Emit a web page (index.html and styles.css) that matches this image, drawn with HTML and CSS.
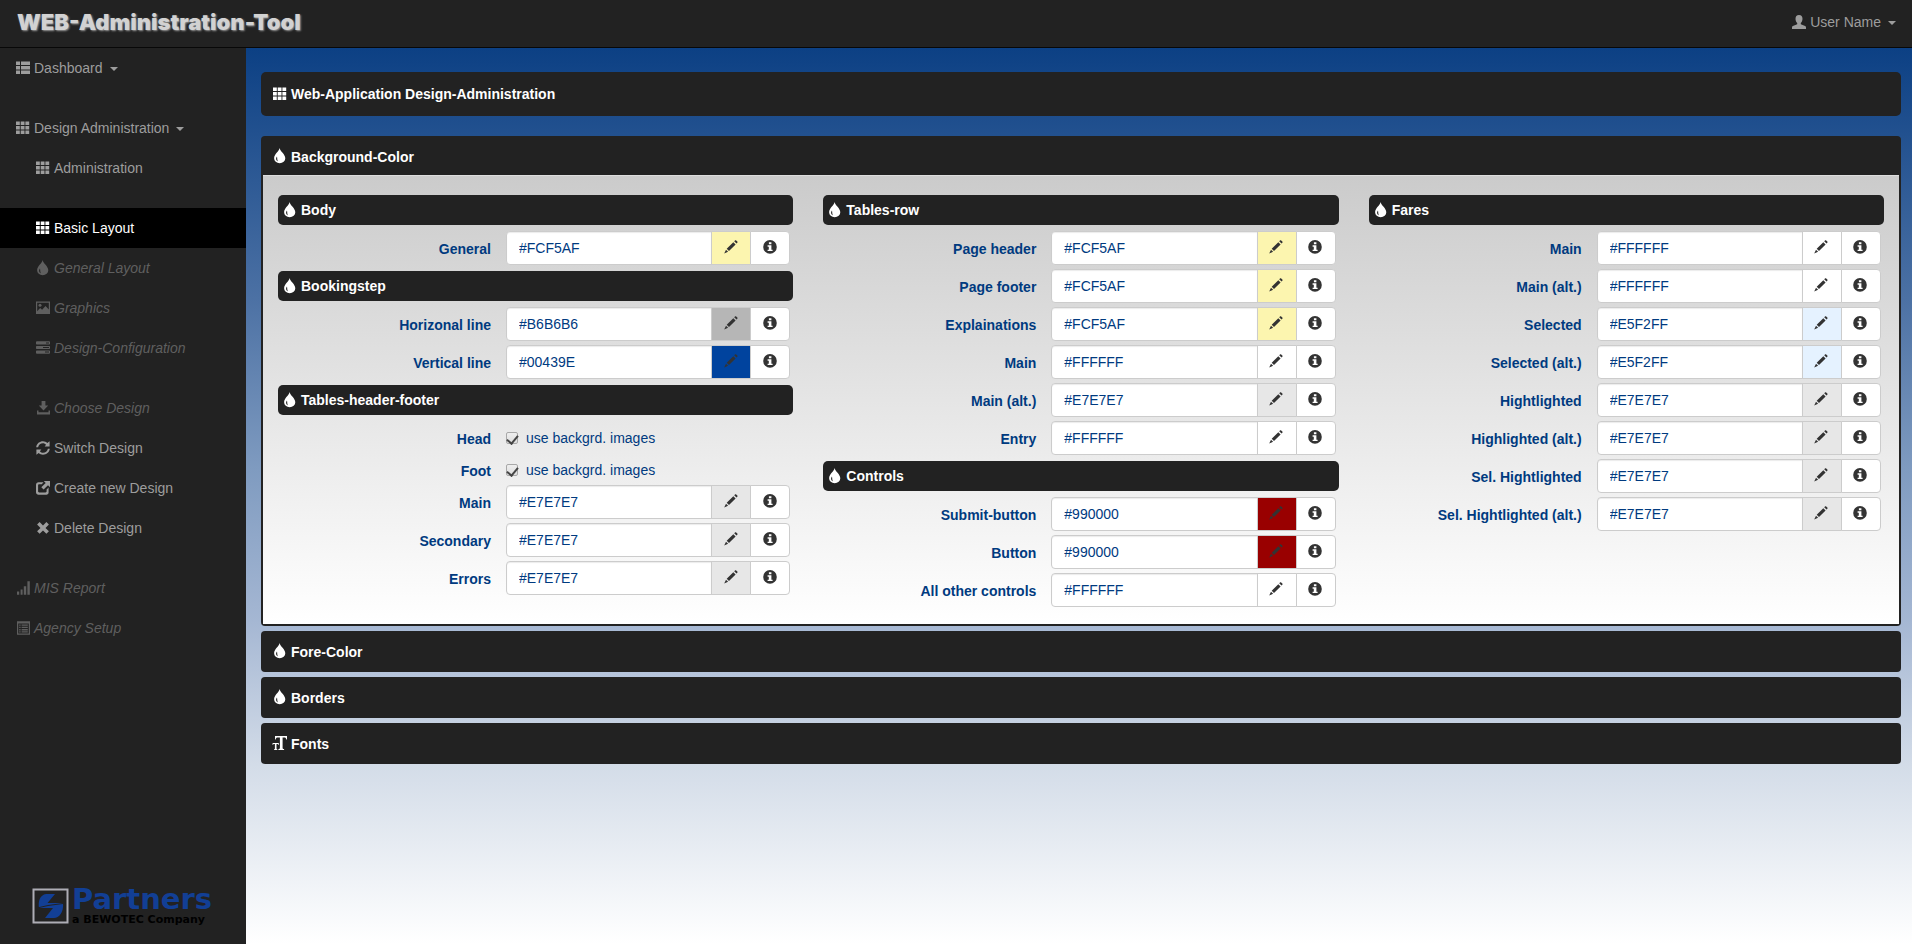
FILE: index.html
```html
<!DOCTYPE html>
<html lang="en">
<head>
<meta charset="utf-8">
<title>WEB-Administration-Tool</title>
<link rel="stylesheet" href="styles.css">
</head>
<body>
<svg class="sprite" aria-hidden="true">
  <symbol id="i-th" viewBox="0 0 14 14"><path d="M0 .5h3.800v3.500H0zM4.700.5h3.800v3.500H4.700zM9.400.5h3.800v3.500H9.400zM0 5h3.800v3.500H0zM4.700 5h3.800v3.500H4.700zM9.400 5h3.800v3.500H9.400zM0 9.500h3.800V13H0zM4.700 9.500h3.800V13H4.700zM9.400 9.500h3.800V13H9.400z"/></symbol>
  <symbol id="i-th-list" viewBox="0 0 14 14"><path d="M0 .5h4v3.500H0zM5 .5h9v3.500H5zM0 5h4v3.500H0zM5 5h9v3.500H5zM0 9.500h4V13H0zM5 9.500h9V13H5z"/></symbol>
  <symbol id="i-tint" viewBox="0 0 14 14" overflow="visible"><path fill-rule="evenodd" d="M6.600-.9C7.100 2.300 12.300 5.500 12.300 9.200a5.600 5 0 0 1-11.200 0C1.100 5.500 6.100 2.300 6.600-.9zM4 7.600C2.400 9.300 3.100 11.800 4.900 12.300 4 10.900 4.400 9.600 4 7.600z"/></symbol>
  <symbol id="i-picture" viewBox="0 0 14 14"><path fill-rule="evenodd" d="M0 .5h14V13H0zM1.200 1.700v8.600l2.900-3.200 2 1.600 3.400-3.800 3.300 3.600V1.700z"/><circle cx="4" cy="4.200" r="1.500"/></symbol>
  <symbol id="i-tasks" viewBox="0 0 14 14"><path fill-rule="evenodd" d="M.6.300h12.800l.6.600v2l-.6.600H.6L0 2.900v-2zM10 1.400v1h3v-1zM.6 4.900h12.800l.6.600v2l-.6.600H.6L0 7.500v-2zM7 6v1h6V6zM.6 9.500h12.800l.6.600v2l-.6.600H.6L0 12.100v-2zM9 10.600v1h4v-1z"/></symbol>
  <symbol id="i-save" viewBox="0 0 14 14"><path d="M5.600 0h3.800v4.500h2.800L7.500 9.600 2.800 4.500h2.800zM1 9.500h1.500v1.800h10V9.500H14V13.600H1z"/></symbol>
  <symbol id="i-refresh" viewBox="0 0 14 14"><path d="M.2 6.200C.7 2.600 3.600.3 7 .3c1.800 0 3.200.7 4.300 1.700L13.600.3V5.400H8.600l1.500-1.600C9.200 2.700 8.200 2.200 7 2.200 4.500 2.200 2.700 3.800 2.100 6.200zM13.800 7.800C13.300 11.400 10.400 13.700 7 13.700c-1.800 0-3.200-.7-4.300-1.700L.4 13.700V8.600h5l-1.500 1.600c.9 1.100 1.900 1.600 3.100 1.600 2.500 0 4.300-1.600 4.900-4z"/></symbol>
  <symbol id="i-new" viewBox="0 0 14 14"><path d="M7.800 0H14v6.200l-2-2-4.400 4.400-2.300-2.300L9.700 2zM2.500 1.300h5L5.800 3.200H3.200c-.7 0-1.100.4-1.100 1.100v6c0 .7.400 1.100 1.100 1.100h6.300c.7 0 1.100-.4 1.100-1.100V8.500l2-2v5c0 1.300-.9 2.200-2.200 2.200H2.500C1.100 13.700 0 12.700 0 11.300V3.700c0-1.400 1.100-2.400 2.500-2.400z"/></symbol>
  <symbol id="i-remove" viewBox="0 0 14 14"><path d="M3.600 1 7 4.400 10.400 1 12.900 3.500 9.500 6.900 12.900 10.300 10.400 12.800 7 9.400 3.600 12.800 1.100 10.300 4.500 6.900 1.100 3.500z"/></symbol>
  <symbol id="i-signal" viewBox="0 0 14 14"><path d="M1 10.600h2.200v3.200H1zM4.600 8.600h2v5.200h-2zM7.800 5.200h2.400v8.600H7.800zM11.400.2h2.400v13.600h-2.400z"/></symbol>
  <symbol id="i-list-alt" viewBox="0 0 14 14"><path fill-rule="evenodd" d="M1 .2h13v13.600H1zM2.200 2.400v10.200h10.600V2.400z"/><path d="M3.200 3.500h1.400v1.300H3.200zM5.600 3.500h6.200v1.300H5.600zM3.200 5.800h1.400v1.300H3.200zM5.600 5.800h6.200v1.300H5.600zM3.200 8.100h1.400v1.300H3.200zM5.600 8.100h6.200v1.300H5.600zM3.200 10.300h1.400v1.300H3.200zM5.600 10.300h6.200v1.300H5.600z"/></symbol>
  <symbol id="i-user" viewBox="0 0 14 14"><path d="M7 0c2.400 0 3.500 1.600 3.500 3.800 0 1.800-.7 3.400-1.700 4.200v1.200l4.300 1.900c.6.300.9.800.9 1.400V14H0v-1.500c0-.6.300-1.100.9-1.400l4.300-1.900V8C4.200 7.200 3.500 5.600 3.500 3.800 3.500 1.600 4.600 0 7 0z"/></symbol>
  <symbol id="i-pencil" viewBox="0 0 14 14"><path d="M11 .5c.4-.4.800-.4 1.200 0l1.100 1.100c.4.400.4.800 0 1.200l-.8.800-2.300-2.300zM9.300 2.200l2.300 2.300L5 11.100 2.700 8.800zM2 9.700l2.100 2.100L.2 13.600z"/></symbol>
  <symbol id="i-info" viewBox="0 0 14 14"><path fill-rule="evenodd" d="M7 .1a6.800 6.800 0 1 1 0 13.600A6.800 6.800 0 0 1 7 .1zM5.900 2.200v2h2.500v-2zM4.600 5.300v1.400h1.200v3H4.600V11.100h5V9.700H8.400V5.300z"/></symbol>
  <symbol id="i-text" viewBox="0 0 14 14" overflow="visible"><path d="M2 0h12v3.400h-.7c-.3-1.300-.8-1.800-2-1.800H9.600v10.200c0 .9.300 1.200 1.500 1.300v.9H5.400v-.9c1.200-.1 1.500-.4 1.500-1.300V1.600H4.700c-1.200 0-1.700.5-2 1.800H2zM-.4 7h6.200v1.900h-.4c-.2-.7-.5-.9-1.200-.9h-.7v4.600c0 .5.200.7.900.8v.6H1v-.6c.7-.1.900-.3.900-.8V8h-.7c-.7 0-1 .2-1.200.9h-.4z"/></symbol>
</svg>

<header class="navbar">
  <a class="brand" href="#">WEB-Administration-Tool</a>
  <a class="user" href="#"><svg class="icon"><use href="#i-user"/></svg>User Name<span class="caret"></span></a>
</header>

<div class="layout">
  <aside class="sidebar">
    <nav class="menu">
      <a href="#"><svg class="icon"><use href="#i-th-list"/></svg>Dashboard<span class="caret"></span></a>
      <a class="gap" href="#"><svg class="icon"><use href="#i-th"/></svg>Design Administration<span class="caret"></span></a>
      <a class="sub" href="#"><svg class="icon"><use href="#i-th"/></svg>Administration</a>
      <a class="sub gap active" href="#"><svg class="icon"><use href="#i-th"/></svg>Basic Layout</a>
      <a class="sub off" href="#"><svg class="icon"><use href="#i-tint"/></svg>General Layout</a>
      <a class="sub off" href="#"><svg class="icon"><use href="#i-picture"/></svg>Graphics</a>
      <a class="sub off" href="#"><svg class="icon"><use href="#i-tasks"/></svg>Design-Configuration</a>
      <a class="sub gap off" href="#"><svg class="icon"><use href="#i-save"/></svg>Choose Design</a>
      <a class="sub" href="#"><svg class="icon"><use href="#i-refresh"/></svg>Switch Design</a>
      <a class="sub" href="#"><svg class="icon"><use href="#i-new"/></svg>Create new Design</a>
      <a class="sub" href="#"><svg class="icon"><use href="#i-remove"/></svg>Delete Design</a>
      <a class="gap off" href="#"><svg class="icon"><use href="#i-signal"/></svg>MIS Report</a>
      <a class="off" href="#"><svg class="icon"><use href="#i-list-alt"/></svg>Agency Setup</a>
    </nav>
    <div class="logo">
      <svg class="logo-mark" viewBox="0 0 37 36" aria-hidden="true">
        <path fill="none" stroke="#aeadb5" stroke-width="2" d="M1.500 1.500h34v33h-34z"/>
        <path fill="#123f95" d="M14 6h9L15.500 15H31c1 9-4 15-9 15h-9l8-10H7C6 13 8 7 14 6z"/>
        <path fill="none" stroke="#222" d="M5 20 16 17.500 31 15.500"/>
      </svg>
      <div class="logo-text">
        <span class="logo-name">Partners</span>
        <span class="logo-tag">a BEWOTEC Company</span>
      </div>
    </div>
  </aside>

  <main class="content">
    <h1 class="title"><svg class="icon"><use href="#i-th"/></svg>Web-Application Design-Administration</h1>

    <section class="panel open">
      <h2><button class="panel-head" type="button"><svg class="icon"><use href="#i-tint"/></svg>Background-Color</button></h2>
      <form class="panel-body">
        <div class="col">
          <h3><svg class="icon"><use href="#i-tint"/></svg>Body</h3>
          <div class="row"><label for="a1">General</label><div class="group"><input id="a1" type="text" value="#FCF5AF"><button class="yellow" type="button" aria-label="Edit"><svg class="icon"><use href="#i-pencil"/></svg></button><button type="button" aria-label="Info"><svg class="icon"><use href="#i-info"/></svg></button></div></div>
          <h3><svg class="icon"><use href="#i-tint"/></svg>Bookingstep</h3>
          <div class="row"><label for="a2">Horizonal line</label><div class="group"><input id="a2" type="text" value="#B6B6B6"><button class="gray" type="button" aria-label="Edit"><svg class="icon"><use href="#i-pencil"/></svg></button><button type="button" aria-label="Info"><svg class="icon"><use href="#i-info"/></svg></button></div></div>
          <div class="row"><label for="a3">Vertical line</label><div class="group"><input id="a3" type="text" value="#00439E"><button class="blue" type="button" aria-label="Edit"><svg class="icon"><use href="#i-pencil"/></svg></button><button type="button" aria-label="Info"><svg class="icon"><use href="#i-info"/></svg></button></div></div>
          <h3><svg class="icon"><use href="#i-tint"/></svg>Tables-header-footer</h3>
          <div class="row check"><span class="name">Head</span><label class="option"><input type="checkbox" checked>use backgrd. images</label></div>
          <div class="row check"><span class="name">Foot</span><label class="option"><input type="checkbox" checked>use backgrd. images</label></div>
          <div class="row"><label for="a4">Main</label><div class="group"><input id="a4" type="text" value="#E7E7E7"><button class="light" type="button" aria-label="Edit"><svg class="icon"><use href="#i-pencil"/></svg></button><button type="button" aria-label="Info"><svg class="icon"><use href="#i-info"/></svg></button></div></div>
          <div class="row"><label for="a5">Secondary</label><div class="group"><input id="a5" type="text" value="#E7E7E7"><button class="light" type="button" aria-label="Edit"><svg class="icon"><use href="#i-pencil"/></svg></button><button type="button" aria-label="Info"><svg class="icon"><use href="#i-info"/></svg></button></div></div>
          <div class="row"><label for="a6">Errors</label><div class="group"><input id="a6" type="text" value="#E7E7E7"><button class="light" type="button" aria-label="Edit"><svg class="icon"><use href="#i-pencil"/></svg></button><button type="button" aria-label="Info"><svg class="icon"><use href="#i-info"/></svg></button></div></div>
        </div>

        <div class="col">
          <h3><svg class="icon"><use href="#i-tint"/></svg>Tables-row</h3>
          <div class="row"><label for="b1">Page header</label><div class="group"><input id="b1" type="text" value="#FCF5AF"><button class="yellow" type="button" aria-label="Edit"><svg class="icon"><use href="#i-pencil"/></svg></button><button type="button" aria-label="Info"><svg class="icon"><use href="#i-info"/></svg></button></div></div>
          <div class="row"><label for="b2">Page footer</label><div class="group"><input id="b2" type="text" value="#FCF5AF"><button class="yellow" type="button" aria-label="Edit"><svg class="icon"><use href="#i-pencil"/></svg></button><button type="button" aria-label="Info"><svg class="icon"><use href="#i-info"/></svg></button></div></div>
          <div class="row"><label for="b3">Explainations</label><div class="group"><input id="b3" type="text" value="#FCF5AF"><button class="yellow" type="button" aria-label="Edit"><svg class="icon"><use href="#i-pencil"/></svg></button><button type="button" aria-label="Info"><svg class="icon"><use href="#i-info"/></svg></button></div></div>
          <div class="row"><label for="b4">Main</label><div class="group"><input id="b4" type="text" value="#FFFFFF"><button type="button" aria-label="Edit"><svg class="icon"><use href="#i-pencil"/></svg></button><button type="button" aria-label="Info"><svg class="icon"><use href="#i-info"/></svg></button></div></div>
          <div class="row"><label for="b5">Main (alt.)</label><div class="group"><input id="b5" type="text" value="#E7E7E7"><button class="light" type="button" aria-label="Edit"><svg class="icon"><use href="#i-pencil"/></svg></button><button type="button" aria-label="Info"><svg class="icon"><use href="#i-info"/></svg></button></div></div>
          <div class="row"><label for="b6">Entry</label><div class="group"><input id="b6" type="text" value="#FFFFFF"><button type="button" aria-label="Edit"><svg class="icon"><use href="#i-pencil"/></svg></button><button type="button" aria-label="Info"><svg class="icon"><use href="#i-info"/></svg></button></div></div>
          <h3><svg class="icon"><use href="#i-tint"/></svg>Controls</h3>
          <div class="row"><label for="b7">Submit-button</label><div class="group"><input id="b7" type="text" value="#990000"><button class="red" type="button" aria-label="Edit"><svg class="icon"><use href="#i-pencil"/></svg></button><button type="button" aria-label="Info"><svg class="icon"><use href="#i-info"/></svg></button></div></div>
          <div class="row"><label for="b8">Button</label><div class="group"><input id="b8" type="text" value="#990000"><button class="red" type="button" aria-label="Edit"><svg class="icon"><use href="#i-pencil"/></svg></button><button type="button" aria-label="Info"><svg class="icon"><use href="#i-info"/></svg></button></div></div>
          <div class="row"><label for="b9">All other controls</label><div class="group"><input id="b9" type="text" value="#FFFFFF"><button type="button" aria-label="Edit"><svg class="icon"><use href="#i-pencil"/></svg></button><button type="button" aria-label="Info"><svg class="icon"><use href="#i-info"/></svg></button></div></div>
        </div>

        <div class="col">
          <h3><svg class="icon"><use href="#i-tint"/></svg>Fares</h3>
          <div class="row"><label for="c1">Main</label><div class="group"><input id="c1" type="text" value="#FFFFFF"><button type="button" aria-label="Edit"><svg class="icon"><use href="#i-pencil"/></svg></button><button type="button" aria-label="Info"><svg class="icon"><use href="#i-info"/></svg></button></div></div>
          <div class="row"><label for="c2">Main (alt.)</label><div class="group"><input id="c2" type="text" value="#FFFFFF"><button type="button" aria-label="Edit"><svg class="icon"><use href="#i-pencil"/></svg></button><button type="button" aria-label="Info"><svg class="icon"><use href="#i-info"/></svg></button></div></div>
          <div class="row"><label for="c3">Selected</label><div class="group"><input id="c3" type="text" value="#E5F2FF"><button class="sky" type="button" aria-label="Edit"><svg class="icon"><use href="#i-pencil"/></svg></button><button type="button" aria-label="Info"><svg class="icon"><use href="#i-info"/></svg></button></div></div>
          <div class="row"><label for="c4">Selected (alt.)</label><div class="group"><input id="c4" type="text" value="#E5F2FF"><button class="sky" type="button" aria-label="Edit"><svg class="icon"><use href="#i-pencil"/></svg></button><button type="button" aria-label="Info"><svg class="icon"><use href="#i-info"/></svg></button></div></div>
          <div class="row"><label for="c5">Hightlighted</label><div class="group"><input id="c5" type="text" value="#E7E7E7"><button class="light" type="button" aria-label="Edit"><svg class="icon"><use href="#i-pencil"/></svg></button><button type="button" aria-label="Info"><svg class="icon"><use href="#i-info"/></svg></button></div></div>
          <div class="row"><label for="c6">Highlighted (alt.)</label><div class="group"><input id="c6" type="text" value="#E7E7E7"><button class="light" type="button" aria-label="Edit"><svg class="icon"><use href="#i-pencil"/></svg></button><button type="button" aria-label="Info"><svg class="icon"><use href="#i-info"/></svg></button></div></div>
          <div class="row"><label for="c7">Sel. Hightlighted</label><div class="group"><input id="c7" type="text" value="#E7E7E7"><button class="light" type="button" aria-label="Edit"><svg class="icon"><use href="#i-pencil"/></svg></button><button type="button" aria-label="Info"><svg class="icon"><use href="#i-info"/></svg></button></div></div>
          <div class="row"><label for="c8">Sel. Hightlighted (alt.)</label><div class="group"><input id="c8" type="text" value="#E7E7E7"><button class="light" type="button" aria-label="Edit"><svg class="icon"><use href="#i-pencil"/></svg></button><button type="button" aria-label="Info"><svg class="icon"><use href="#i-info"/></svg></button></div></div>
        </div>
      </form>
    </section>

    <section class="panel"><h2><button class="panel-head" type="button"><svg class="icon"><use href="#i-tint"/></svg>Fore-Color</button></h2></section>
    <section class="panel"><h2><button class="panel-head" type="button"><svg class="icon"><use href="#i-tint"/></svg>Borders</button></h2></section>
    <section class="panel"><h2><button class="panel-head" type="button"><svg class="icon"><use href="#i-text"/></svg>Fonts</button></h2></section>
  </main>
</div>
</body>
</html>
```
FILE: styles.css
```css
* { box-sizing: border-box; }

body {
  margin: 0;
  min-height: 100vh;
  display: flex;
  flex-direction: column;
  background: #222;
  color: #003a7f;
  font: 14px/20px "Liberation Sans", Arial, sans-serif;
}

h1, h2, h3 { margin: 0; font-size: 14px; line-height: 20px; }
a { color: inherit; text-decoration: none; }
button, input { font: inherit; }

.sprite { position: absolute; width: 0; height: 0; }

.icon {
  flex: none;
  width: 14px;
  height: 14px;
  margin: 0 4px 1px 0;
  fill: currentColor;
  overflow: visible;
}

.caret {
  margin: 1px 0 0 7px;
  border: 4px solid transparent;
  border-top-color: currentColor;
  border-bottom: 0;
}

/* Top bar */
.navbar {
  display: flex;
  justify-content: space-between;
  align-items: center;
  min-height: 48px;
  padding: 0 16px 3px 17px;
  border-bottom: 1px solid #080808;
  color: #9d9d9d;
}

.brand {
  font: 900 22px/24px Inter, "Liberation Sans", sans-serif;
  color: #d2d2d2;
  text-shadow: 1px 1px 2px #999;
}

.user { display: flex; align-items: center; }

/* Sidebar */
.layout { display: flex; flex: 1; }

.sidebar {
  flex: none;
  width: 246px;
  display: flex;
  flex-direction: column;
  justify-content: space-between;
}

.menu { display: flex; flex-direction: column; color: #9d9d9d; }

.menu a {
  display: flex;
  align-items: center;
  height: 40px;
  padding: 0 16px;
}

.menu .sub { padding-left: 36px; }
.menu .gap { margin-top: 20px; }
.menu .off { color: #5f5f5f; font-style: italic; }
.menu .active { background: #000; color: #fff; }

.logo { display: flex; gap: 3px; padding: 0 0 19px 32px; }
.logo-mark { width: 37px; height: 36px; margin-top: 3px; }
.logo-text { display: flex; flex-direction: column; }
.logo-name { font: bold 29px/29px "DejaVu Sans", sans-serif; color: #123f95; }
.logo-tag { font: bold 11px/11px "DejaVu Sans", sans-serif; color: #000; }

/* Content */
.content {
  flex: 1;
  min-width: 0;
  padding: 24px 11px 24px 15px;
  background: linear-gradient(#0c4084, #4c71a4 28%, #7f9bc0 47%, #a5b7d3 64%, #d3dce8 80%, #fff);
}

.title {
  display: flex;
  align-items: center;
  height: 44px;
  margin-bottom: 20px;
  padding: 0 12px;
  border-radius: 5px;
  background: #222;
  color: #fff;
}

.panel {
  margin-bottom: 5px;
  border-radius: 4px;
  background: #222;
}

.open { padding: 0 2px 2px; }

.panel-head {
  display: flex;
  align-items: center;
  width: 100%;
  height: 41px;
  padding: 0 12px;
  border: 0;
  background: none;
  color: #fff;
  font-weight: bold;
}

.open .panel-head { height: 39px; padding: 2px 10px 0; }

.panel-body {
  display: grid;
  grid-template-columns: repeat(3, minmax(0, 1fr));
  gap: 30px;
  padding: 19px 15px 15px;
  border-top: 1px solid #ddd;
  background: linear-gradient(#cbcbcb, #fff);
}

.col h3 {
  display: flex;
  align-items: center;
  height: 30px;
  margin: 4px 0;
  padding: 0 5px;
  border-radius: 5px;
  background: #222;
  color: #fff;
}

.col h3:first-child { margin-top: 0; }

.row {
  display: grid;
  grid-template-columns: 213px minmax(0, 1fr);
  gap: 15px;
  padding: 2px 3px 2px 0;
}

.row > label:first-child, .name {
  padding-top: 8px;
  font-weight: bold;
  text-align: right;
}

.group { display: flex; }

.group input {
  flex: 1;
  min-width: 0;
  height: 34px;
  padding: 0 12px;
  border: 1px solid #ccc;
  border-radius: 4px 0 0 4px;
  background: #fff;
  color: #003a7f;
  box-shadow: inset 0 1px 1px rgba(0, 0, 0, .08);
}

.group button {
  display: flex;
  align-items: center;
  justify-content: center;
  width: 40px;
  margin-left: -1px;
  padding: 0;
  border: 1px solid #ccc;
  background: #fff;
  color: #333;
}

.group button:last-child { border-radius: 0 4px 4px 0; }
.group .icon { margin: 0 1px 2px 0; }

.group .yellow { background: #fcf5af; }
.group .gray { background: #b6b6b6; }
.group .blue { background: #00439e; }
.group .light { background: #e7e7e7; }
.group .sky { background: #e5f2ff; }
.group .red { background: #900; }

.check { height: 32px; }

.option {
  display: flex;
  align-items: center;
  gap: 8px;
  height: 20px;
  margin-top: 7px;
}

.option input {
  appearance: none;
  display: flex;
  justify-content: center;
  width: 12px;
  height: 12px;
  margin: 0;
  border: 1px solid #a8a8a8;
  border-radius: 2px;
  background: linear-gradient(#eee, #ddd);
}

.option input:checked::after {
  content: "";
  width: 5px;
  height: 9px;
  border: solid #444;
  border-width: 0 2px 2px 0;
  transform: rotate(40deg);
}
```
